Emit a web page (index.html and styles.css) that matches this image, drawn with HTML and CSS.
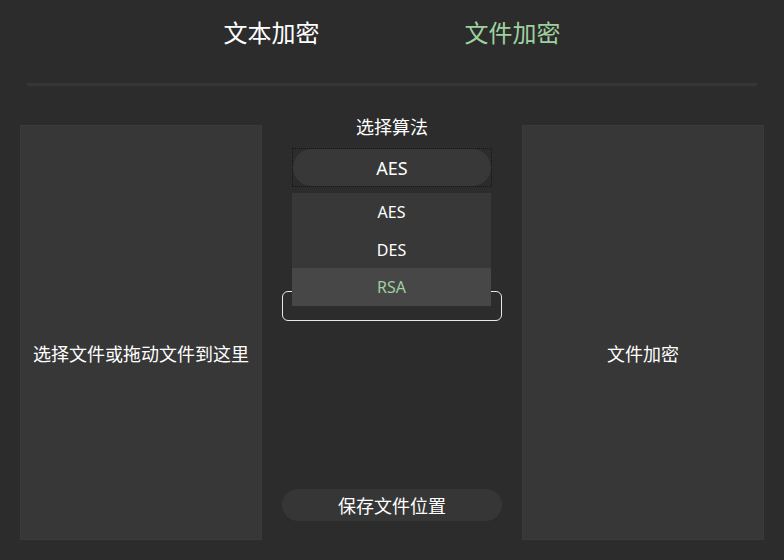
FILE: index.html
```html
<!DOCTYPE html>
<html lang="zh-CN">
<head>
    <meta charset="UTF-8" />
    <title>文件加密</title>
    <link rel="stylesheet" href="styles.css">
</head>
<body>
    <header class="tabs">
        <a href="#" class="tab">文本加密</a>
        <a href="#" class="tab active">文件加密</a>
    </header>
    <div class="divider"></div>

    <main class="workspace">
        <div class="panel">选择文件或拖动文件到这里</div>

        <div class="controls">
            <div class="label">选择算法</div>
            <div class="select-wrap">
                <div class="select">AES</div>
                <ul class="options">
                    <li>AES</li>
                    <li>DES</li>
                    <li class="hover">RSA</li>
                </ul>
            </div>
            <div class="key-box"></div>
            <button class="save-btn">保存文件位置</button>
        </div>

        <div class="panel">文件加密</div>
    </main>
</body>
</html>
```

FILE: styles.css
```css
* {
    margin: 0;
    padding: 0;
    box-sizing: border-box;
}

body {
    font-family: 'Noto Sans', 'Noto Sans CJK SC', sans-serif;
    background-color: #2c2c2c;
    color: #fff;
    height: 560px;
    overflow: hidden;
}

/* Top tabs */
.tabs {
    height: 83px;
    display: flex;
    justify-content: center;
    align-items: flex-start;
    gap: 145px;
    padding-top: 17px;
}

.tab {
    color: #fff;
    text-decoration: none;
    font-size: 24px;
    line-height: 32px;
}

.tab.active {
    color: #9fd09f;
}

.divider {
    height: 3px;
    margin: 0 27px;
    background-color: #363636;
}

/* Main area */
.workspace {
    display: grid;
    grid-template-columns: 242px 260px 242px;
    margin: 29px 20px 0;
    height: 425px;
}

.panel {
    margin-top: 10px;
    background-color: #373737;
    border: 1px solid #3b3b3b;
    display: flex;
    align-items: center;
    justify-content: center;
    font-size: 18px;
    padding-top: 40px;
}

.controls {
    display: flex;
    flex-direction: column;
    align-items: center;
}

.label {
    font-size: 18px;
    line-height: 24px;
}

.select-wrap {
    position: relative;
    margin-top: 9px;
    width: 200px;
    border: 1px dotted #151515;
}

.select {
    height: 37px;
    border-radius: 19px;
    background-color: #383838;
    display: flex;
    align-items: center;
    justify-content: center;
    font-size: 18px;
}

.options {
    list-style: none;
    position: absolute;
    top: 44px;
    left: -1px;
    width: 199px;
    background-color: #383838;
    z-index: 2;
}

.options li {
    height: 37.7px;
    display: flex;
    align-items: center;
    justify-content: center;
    font-size: 16px;
}

.options li.hover {
    background-color: #474747;
    color: #9fd09f;
}

.key-box {
    margin-top: 104px;
    width: 220px;
    height: 30px;
    border: 1px solid #e8e8e8;
    border-radius: 6px;
}

.save-btn {
    margin-top: auto;
    margin-bottom: 19px;
    width: 220px;
    height: 32px;
    border: none;
    border-radius: 16px;
    background-color: #363636;
    color: #fff;
    font-family: inherit;
    font-size: 18px;
}
```
